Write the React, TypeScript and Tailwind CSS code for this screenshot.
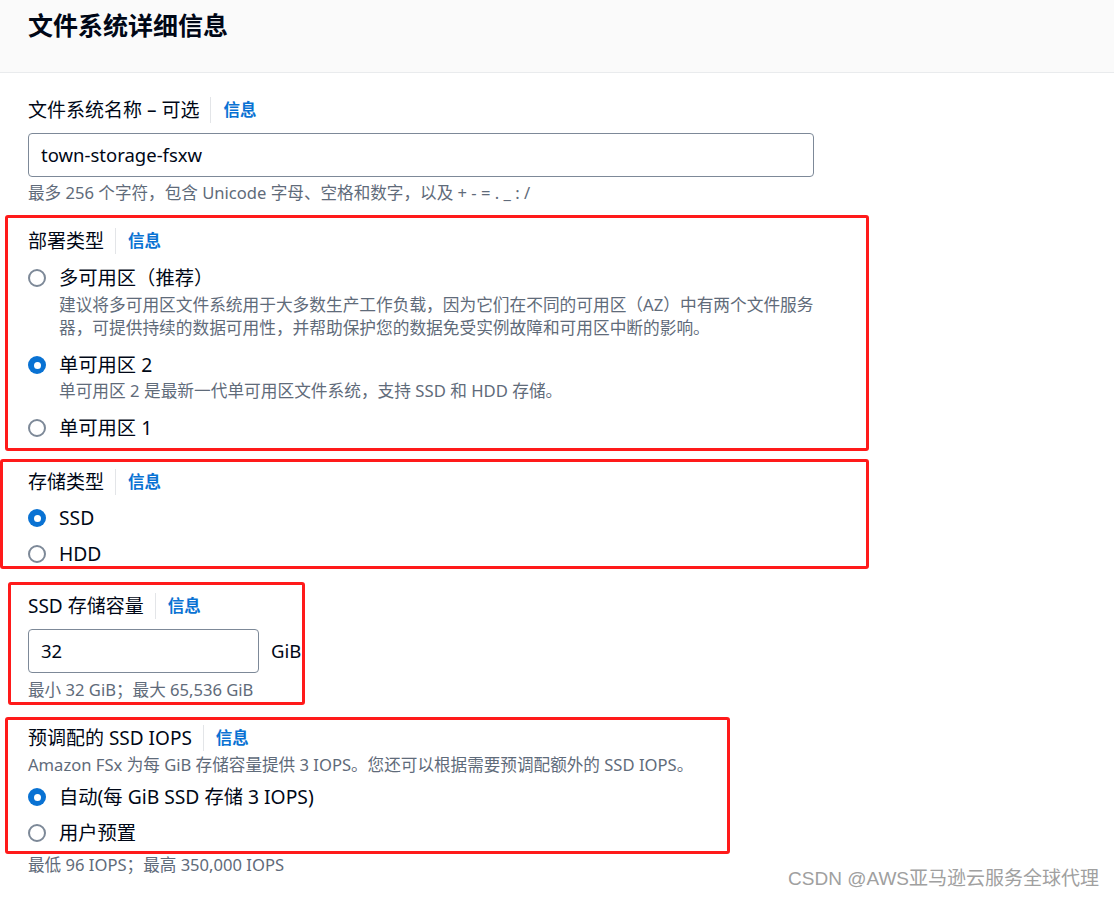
import { ReactNode } from "react";

const Info = () => (
    <span className="flex items-center">
        <span className="ml-[11px] mr-[12px] h-[26px] w-px bg-[#e3e5e8]" />
        <span className="text-[16.5px] font-bold text-[#0972d3]">信息</span>
    </span>
);

const Label = ({ children, className = "" }: { children: ReactNode; className?: string }) => (
    <div className={`flex h-[24px] items-center text-[19px] leading-[24px] text-[#000716] ${className}`}>
        <span>{children}</span>
        <Info />
    </div>
);

const Radio = ({ checked, label, className = "" }: { checked?: boolean; label: string; className?: string }) => (
    <div className={`flex h-[24px] items-center ${className}`}>
        {checked ? (
            <span className="flex h-[18px] w-[18px] shrink-0 items-center justify-center rounded-full bg-[#0972d3]">
                <span className="h-[7px] w-[7px] rounded-full bg-white" />
            </span>
        ) : (
            <span className="h-[18px] w-[18px] shrink-0 rounded-full border-2 border-[#7d8998] bg-white" />
        )}
        <span className="ml-[13px] text-[19.3px] leading-[24px] text-[#000716]">{label}</span>
    </div>
);

const App = () => {
    return (
        <div
            className="relative h-[898px] w-[1114px] overflow-hidden bg-white"
            style={{ fontFamily: '"Noto Sans", "Noto Sans CJK SC", sans-serif' }}
        >
            {/* 标题栏 */}
            <div className="h-[73px] border-b border-[#e9ebed] bg-[#fafafa] pl-[28px] pt-[10px]">
                <h2 className="text-[25px] font-bold leading-[30px] text-[#000716]">文件系统详细信息</h2>
            </div>

            <div className="pt-[25px]">
                {/* 文件系统名称 */}
                <div className="pl-[28px]">
                    <Label>文件系统名称 – 可选</Label>
                    <div className="mt-[11px] flex h-[44px] w-[786px] items-center rounded-[4px] border border-[#7d8998] px-[12px] text-[18.5px] text-[#000716]">
                        town-storage-fsxw
                    </div>
                    <div className="mt-[6px] text-[16.6px] leading-[20px] text-[#5f6b7a]">
                        最多 256 个字符，包含 Unicode 字母、空格和数字，以及 + - = . _ : /
                    </div>
                </div>

                {/* 部署类型 */}
                <div className="ml-[5px] mt-[12px] w-[864px] rounded-[3px] border-[3px] border-[#ff1a1a] pb-[8px] pl-[20px] pt-[11px]">
                    <Label>部署类型</Label>
                    <Radio label="多可用区（推荐）" className="mt-[13px]" />
                    <div className="ml-[31px] mt-[3px] w-[770px] text-[16.7px] leading-[23px] text-[#5f6b7a]">
                        建议将多可用区文件系统用于大多数生产工作负载，因为它们在不同的可用区（AZ）中有两个文件服务器，可提供持续的数据可用性，并帮助保护您的数据免受实例故障和可用区中断的影响。
                    </div>
                    <Radio checked label="单可用区 2" className="mt-[14px]" />
                    <div className="ml-[31px] mt-[2px] text-[16.7px] leading-[23px] text-[#5f6b7a]">
                        单可用区 2 是最新一代单可用区文件系统，支持 SSD 和 HDD 存储。
                    </div>
                    <Radio label="单可用区 1" className="mt-[14px]" />
                </div>

                {/* 存储类型 */}
                <div className="mt-[8px] h-[110px] w-[869px] rounded-[3px] border-[3px] border-[#ff1a1a] pl-[25px] pt-[8px]">
                    <Label>存储类型</Label>
                    <Radio checked label="SSD" className="mt-[12px]" />
                    <Radio label="HDD" className="mt-[12px]" />
                </div>

                {/* SSD 存储容量 */}
                <div className="ml-[8px] mt-[13px] w-[297px] rounded-[3px] border-[3px] border-[#ff1a1a] pb-[2px] pl-[17px] pt-[9px]">
                    <Label>SSD 存储容量</Label>
                    <div className="mt-[11px] flex items-center">
                        <div className="flex h-[44px] w-[231px] items-center rounded-[4px] border border-[#7d8998] px-[12px] text-[18.5px] text-[#000716]">
                            32
                        </div>
                        <span className="ml-[12px] text-[18.5px] text-[#000716]">GiB</span>
                    </div>
                    <div className="mt-[7px] text-[16.6px] leading-[20px] text-[#5f6b7a]">最小 32 GiB；最大 65,536 GiB</div>
                </div>

                {/* 预调配的 SSD IOPS */}
                <div className="ml-[5px] mt-[12px] w-[725px] rounded-[3px] border-[3px] border-[#ff1a1a] pb-[6px] pl-[20px] pt-[6px]">
                    <Label>预调配的 SSD IOPS</Label>
                    <div className="mt-[4px] whitespace-nowrap text-[16.6px] leading-[22px] text-[#5f6b7a]">
                        Amazon FSx 为每 GiB 存储容量提供 3 IOPS。您还可以根据需要预调配额外的 SSD IOPS。
                    </div>
                    <Radio checked label="自动(每 GiB SSD 存储 3 IOPS)" className="mt-[9px]" />
                    <Radio label="用户预置" className="mt-[12px]" />
                </div>

                <div className="mt-[1px] pl-[28px] text-[16.6px] leading-[20px] text-[#5f6b7a]">最低 96 IOPS；最高 350,000 IOPS</div>
            </div>

            {/* 水印 */}
            <div
                className="absolute bottom-[8px] right-[15px] text-[19px] leading-[22px] text-[#a0a0a0]"
                style={{ fontFamily: '"Liberation Sans", "Noto Sans CJK SC", sans-serif' }}
            >
                CSDN @AWS亚马逊云服务全球代理
            </div>
        </div>
    );
};

export default App;
